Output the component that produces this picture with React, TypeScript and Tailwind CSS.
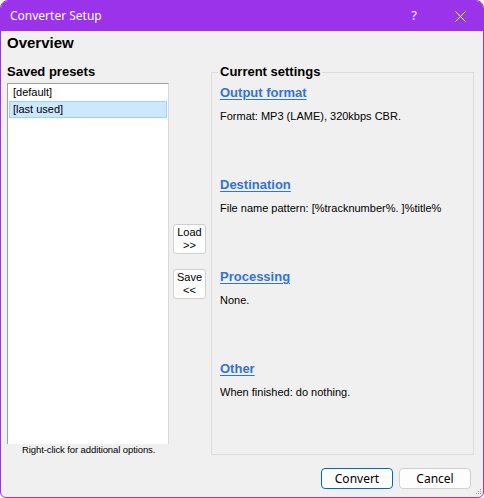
import React from 'react';

const sections = [
  { title: 'Output format', text: 'Format: MP3 (LAME), 320kbps CBR.' },
  { title: 'Destination', text: 'File name pattern: [%tracknumber%. ]%title%' },
  { title: 'Processing', text: 'None.' },
  { title: 'Other', text: 'When finished: do nothing.' },
];

const presets = ['[default]', '[last used]'];

function SideButton({ top, bottom }: { top: string; bottom: string }) {
  return (
    <button className="w-[33px] h-[30px] flex flex-col items-center justify-center bg-[#fdfdfd] border border-[#d0d0d0] rounded-[3px] text-[11px] leading-[13px] text-black">
      <span>{top}</span>
      <span>{bottom}</span>
    </button>
  );
}

export default function App() {
  return (
    <div className="w-[484px] h-[498px] bg-white relative">
      <div className="w-full h-full flex flex-col border border-[#9b33ea] rounded-t-[8px] rounded-b-[6px] overflow-hidden bg-[#f0f0f0] font-['Liberation_Sans',Arial,sans-serif]">
        {/* title bar */}
        <div className="h-[30px] bg-[#9b33ea] flex items-center text-white font-['Noto_Sans','Open_Sans',sans-serif]">
          <span className="ml-[9px] text-[12px]">Converter Setup</span>
          <span className="ml-auto mr-[38px] text-[13px]">?</span>
          <svg width="11" height="11" viewBox="0 0 11 11" className="mr-[17px]">
            <path d="M0.5 0.5 L10.5 10.5 M10.5 0.5 L0.5 10.5" stroke="white" strokeWidth="1" />
          </svg>
        </div>

        {/* body */}
        <div className="flex-1 flex flex-col px-[6px]">
          <div className="pt-[3px] h-[21px] text-[15px] leading-[18px] font-bold text-black">Overview</div>
          <div className="mt-[12px] flex items-start">
            {/* presets */}
            <div className="w-[162px] flex flex-col">
              <div className="h-[16px] text-[13px] leading-[16px] font-bold text-black">Saved presets</div>
              <div className="mt-[3px] h-[361px] bg-white border-t border-l border-[#a0a0a0] border-r border-r-[#dadada] px-[1px]">
                {presets.map((p, i) => (
                  <div
                    key={p}
                    className={`h-[17px] pl-[3px] text-[11px] leading-[15px] text-black border ${
                      i === 1 ? 'bg-[#cce8ff] border-[#99d1ff]' : 'border-transparent'
                    }`}
                  >
                    {p}
                  </div>
                ))}
              </div>
              <div className="h-[12px] pl-[15px] text-[9.5px] leading-[12px] tracking-[-0.1px] text-black">Right-click for additional options.</div>
            </div>

            {/* load / save */}
            <div className="ml-[4px] mt-[160px] flex flex-col gap-[15px]">
              <SideButton top="Load" bottom=">>" />
              <SideButton top="Save" bottom="<<" />
            </div>

            {/* current settings */}
            <fieldset className="ml-[5px] w-[263px] h-[391px] border border-[#dcdcdc] pl-[8px]">
              <legend className="-ml-[2px] px-[2px] text-[13px] leading-[16px] font-bold text-black">Current settings</legend>
              <div className="mt-[5px] flex flex-col">
                {sections.map((s) => (
                  <div key={s.title} className="h-[92px]">
                    <div className="h-[16px] text-[13px] leading-[16px] font-bold text-[#3373d6] underline underline-offset-[2px]">
                      {s.title}
                    </div>
                    <div className="mt-[8px] text-[11px] leading-[14px] text-black">{s.text}</div>
                  </div>
                ))}
              </div>
            </fieldset>
          </div>

          {/* dialog buttons */}
          <div className="mt-[12px] flex justify-end gap-[6px] pr-[6px] font-['Noto_Sans','Open_Sans',sans-serif]">
            <button className="w-[72px] h-[21px] bg-[#fdfdfd] border border-[#0067c0] rounded-[4px] text-[12px] leading-[19px] text-black">
              Convert
            </button>
            <button className="w-[72px] h-[21px] bg-[#fdfdfd] border border-[#d0d0d0] rounded-[4px] text-[12px] leading-[19px] text-black">
              Cancel
            </button>
          </div>
        </div>
      </div>

      {/* size grip */}
      <svg width="6" height="6" viewBox="0 0 6 6" className="absolute right-[2px] bottom-[3px]">
        <rect x="4" y="0" width="1" height="1" fill="#999" />
        <rect x="2" y="2" width="1" height="1" fill="#999" />
        <rect x="4" y="2" width="1" height="1" fill="#999" />
        <rect x="0" y="4" width="1" height="1" fill="#999" />
        <rect x="2" y="4" width="1" height="1" fill="#999" />
        <rect x="4" y="4" width="1" height="1" fill="#999" />
      </svg>
    </div>
  );
}
